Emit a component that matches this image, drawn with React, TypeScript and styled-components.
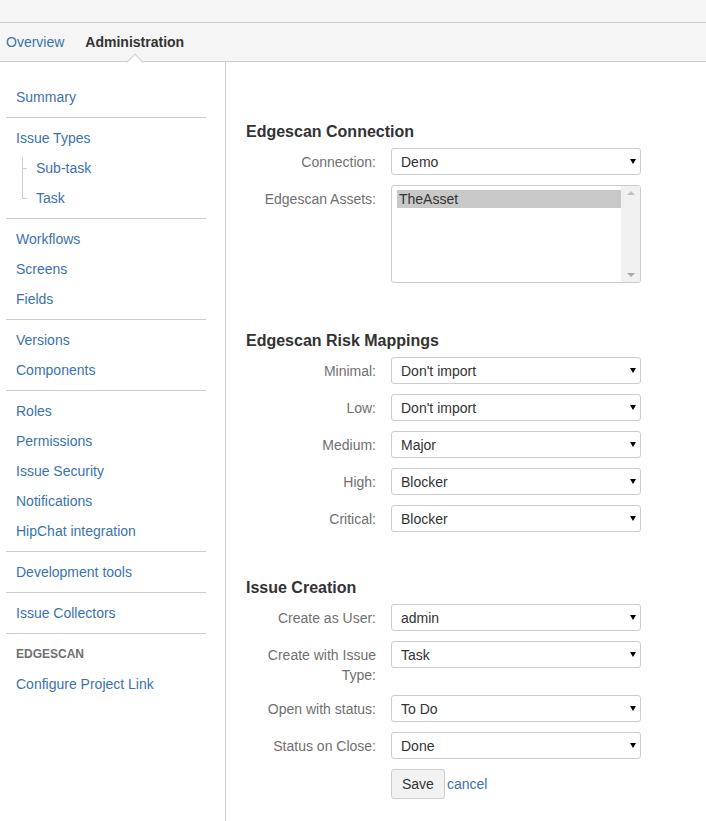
import styled, { createGlobalStyle } from "styled-components";

const GlobalStyle = createGlobalStyle`
  body {
    margin: 0;
    background: #fff;
    color: #333;
    font-family: "Liberation Sans", Arial, sans-serif;
    font-size: 14px;
  }
`;

const Page = styled.div`
  min-height: 100vh;
  display: flex;
  flex-direction: column;
`;

const TopStrip = styled.div`
  height: 22px;
  background: #f5f5f5;
  border-bottom: 1px solid #ccc;
`;

const TabBar = styled.nav`
  height: 38px;
  background: #f5f5f5;
  border-bottom: 1px solid #ccc;
  display: flex;
  align-items: center;
  gap: 21px;
  padding-left: 6px;
`;

const Tab = styled.a<{ $active?: boolean }>`
  position: relative;
  line-height: 38px;
  color: ${(p) => (p.$active ? "#333" : "#3b73af")};
  font-weight: ${(p) => (p.$active ? "bold" : "normal")};
  text-decoration: none;
  cursor: pointer;
  ${(p) =>
    p.$active &&
    `
    &::after {
      content: "";
      position: absolute;
      left: 50%;
      bottom: -7px;
      width: 11px;
      height: 11px;
      margin-left: -6px;
      background: #fff;
      border-left: 1px solid #ccc;
      border-top: 1px solid #ccc;
      transform: rotate(45deg);
    }
  `}
`;

const Body = styled.div`
  flex: 1;
  display: flex;
`;

const Sidebar = styled.aside`
  width: 225px;
  flex-shrink: 0;
  border-right: 1px solid #ccc;
  padding-top: 15px;
`;

const NavGroup = styled.ul<{ $last?: boolean }>`
  list-style: none;
  margin: 0 0 0 6px;
  width: 200px;
  padding: 5px 0;
  border-bottom: ${(p) => (p.$last ? "none" : "1px solid #ccc")};
`;

const NavItem = styled.li<{ $sub?: boolean }>`
  position: relative;
  line-height: 20px;
  padding: 5px 0 5px ${(p) => (p.$sub ? "30px" : "10px")};
  a {
    color: #3b73af;
    text-decoration: none;
  }
  ${(p) =>
    p.$sub &&
    `
    &::before {
      content: "";
      position: absolute;
      left: 16px;
      top: 0;
      bottom: 0;
      border-left: 1px solid #ccc;
    }
    &:nth-child(2)::before { top: 4px; }
    &:last-child::before { bottom: 15px; }
    &::after {
      content: "";
      position: absolute;
      left: 16px;
      top: 15px;
      width: 5px;
      border-top: 1px solid #ccc;
    }
  `}
`;

const NavHeading = styled.li`
  padding: 5px 0 5px 10px;
  line-height: 20px;
  font-size: 12px;
  font-weight: bold;
  color: #707070;
  text-transform: uppercase;
`;

const Main = styled.main`
  flex: 1;
  padding: 60px 20px 20px;
`;

const SectionTitle = styled.h2<{ $gap?: number }>`
  margin: ${(p) => p.$gap ?? 0}px 0 6px;
  font-size: 16px;
  line-height: 20px;
  font-weight: bold;
  color: #333;
`;

const FieldRow = styled.div`
  display: grid;
  grid-template-columns: 130px 250px;
  column-gap: 15px;
  align-items: start;
  margin-bottom: 10px;
`;

const Label = styled.label`
  text-align: right;
  color: #707070;
  line-height: 20px;
  padding-top: 4px;
`;

const SelectBox = styled.div`
  height: 25px;
  border: 1px solid #ccc;
  border-radius: 3px;
  background: #fff;
  display: flex;
  align-items: center;
  padding: 0 4px 0 9px;
  color: #333;
  cursor: pointer;
`;

const SelectValue = styled.span`
  flex: 1;
`;

const Caret = styled.span`
  width: 0;
  height: 0;
  border-left: 3px solid transparent;
  border-right: 3px solid transparent;
  border-top: 5px solid #000;
`;

const ListBox = styled.div`
  height: 96px;
  border: 1px solid #ccc;
  border-radius: 3px;
  display: flex;
  overflow: hidden;
`;

const Options = styled.div`
  flex: 1;
  padding: 4px 0 0 5px;
`;

const Option = styled.div<{ $selected?: boolean }>`
  height: 18px;
  line-height: 18px;
  padding-left: 2px;
  background: ${(p) => (p.$selected ? "#c8c8c8" : "transparent")};
  color: #333;
`;

const ScrollTrack = styled.div`
  width: 19px;
  background: #f1f1f1;
  display: flex;
  flex-direction: column;
  justify-content: space-between;
  align-items: center;
  padding: 5px 0;
`;

const ScrollArrow = styled.span<{ $down?: boolean }>`
  width: 0;
  height: 0;
  border-left: 4px solid transparent;
  border-right: 4px solid transparent;
  ${(p) =>
    p.$down
      ? "border-top: 4px solid #a8a8a8;"
      : "border-bottom: 4px solid #c0c0c0;"}
`;

const Actions = styled.div`
  display: flex;
  align-items: center;
  gap: 2px;
  margin-left: 145px;
`;

const Button = styled.button`
  height: 30px;
  padding: 0 10px;
  border: 1px solid #ccc;
  border-radius: 3px;
  background: #f2f2f2;
  color: #333;
  font-family: inherit;
  font-size: 14px;
  cursor: pointer;
`;

const LinkButton = styled.a`
  color: #3b73af;
  text-decoration: none;
  cursor: pointer;
`;

const navGroups: { items: string[]; sub?: string[] }[] = [
  { items: ["Summary"] },
  { items: ["Issue Types"], sub: ["Sub-task", "Task"] },
  { items: ["Workflows", "Screens", "Fields"] },
  { items: ["Versions", "Components"] },
  {
    items: [
      "Roles",
      "Permissions",
      "Issue Security",
      "Notifications",
      "HipChat integration",
    ],
  },
  { items: ["Development tools"] },
  { items: ["Issue Collectors"] },
];

const riskMappings = [
  ["Minimal", "Don't import"],
  ["Low", "Don't import"],
  ["Medium", "Major"],
  ["High", "Blocker"],
  ["Critical", "Blocker"],
];

const creation = [
  ["Create as User", "admin"],
  ["Create with Issue Type", "Task"],
  ["Open with status", "To Do"],
  ["Status on Close", "Done"],
];

function Select({ value }: { value: string }) {
  return (
    <SelectBox>
      <SelectValue>{value}</SelectValue>
      <Caret />
    </SelectBox>
  );
}

function Field({ label, value }: { label: string; value: string }) {
  return (
    <FieldRow>
      <Label>{label}:</Label>
      <Select value={value} />
    </FieldRow>
  );
}

export default function App() {
  return (
    <Page>
      <GlobalStyle />
      <TopStrip />
      <TabBar>
        <Tab>Overview</Tab>
        <Tab $active>Administration</Tab>
      </TabBar>
      <Body>
        <Sidebar>
          {navGroups.map((group, i) => (
            <NavGroup key={i}>
              {group.items.map((item) => (
                <NavItem key={item}>
                  <a href="#">{item}</a>
                </NavItem>
              ))}
              {group.sub?.map((item) => (
                <NavItem key={item} $sub>
                  <a href="#">{item}</a>
                </NavItem>
              ))}
            </NavGroup>
          ))}
          <NavGroup $last>
            <NavHeading>Edgescan</NavHeading>
            <NavItem>
              <a href="#">Configure Project Link</a>
            </NavItem>
          </NavGroup>
        </Sidebar>

        <Main>
          <SectionTitle>Edgescan Connection</SectionTitle>
          <Field label="Connection" value="Demo" />
          <FieldRow>
            <Label>Edgescan Assets:</Label>
            <ListBox>
              <Options>
                <Option $selected>TheAsset</Option>
              </Options>
              <ScrollTrack>
                <ScrollArrow />
                <ScrollArrow $down />
              </ScrollTrack>
            </ListBox>
          </FieldRow>

          <SectionTitle $gap={48}>Edgescan Risk Mappings</SectionTitle>
          {riskMappings.map(([label, value]) => (
            <Field key={label} label={label} value={value} />
          ))}

          <SectionTitle $gap={46}>Issue Creation</SectionTitle>
          {creation.map(([label, value]) => (
            <Field key={label} label={label} value={value} />
          ))}
          <Actions>
            <Button>Save</Button>
            <LinkButton>cancel</LinkButton>
          </Actions>
        </Main>
      </Body>
    </Page>
  );
}
